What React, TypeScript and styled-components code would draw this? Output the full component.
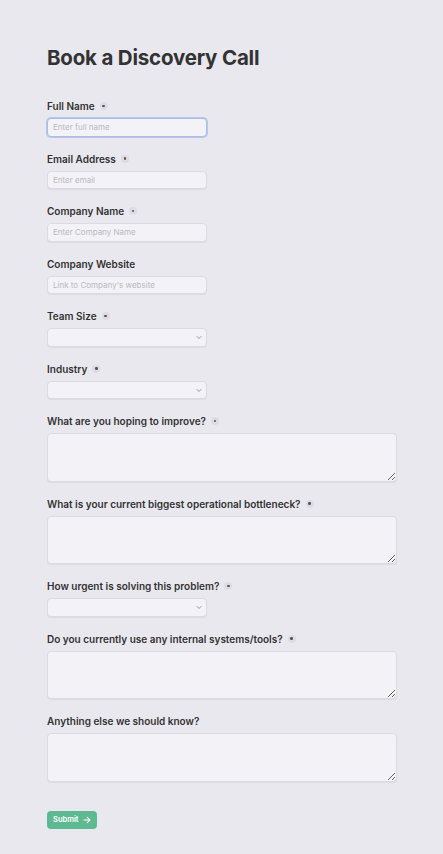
import React from "react";
import styled, { createGlobalStyle } from "styled-components";

const GlobalStyle = createGlobalStyle`
    html, body {
        margin: 0;
        padding: 0;
        background: #e9e8ef;
    }
    body {
        font-family: Inter, "Noto Sans", sans-serif;
        color: #333333;
    }
`;

const Page = styled.div`
    min-height: 854px;
    box-sizing: border-box;
    padding: 44px 46px 40px 47px;
    background: #e9e8ef;
`;

const Heading = styled.h1`
    margin: 0 0 26px;
    font-size: 20.5px;
    line-height: 28px;
    font-weight: 700;
    letter-spacing: -0.2px;
    color: #333333;
`;

const Form = styled.form`
    display: flex;
    flex-direction: column;
`;

const Field = styled.div`
    display: flex;
    flex-direction: column;
    gap: 4px;
    margin-bottom: 14px;
`;

const Label = styled.label`
    display: flex;
    align-items: center;
    gap: 5px;
    height: 16px;
    font-size: 10px;
    font-weight: 600;
    color: #333333;
`;

const Required = styled.span`
    display: inline-flex;
    align-items: center;
    justify-content: center;
    width: 8px;
    height: 8px;
    border-radius: 50%;
    background: #dddce3;

    &::after {
        content: "";
        width: 2.5px;
        height: 2.5px;
        border-radius: 50%;
        background: #555555;
    }
`;

const Input = styled.input<{ $focused?: boolean }>`
    display: block;
    box-sizing: border-box;
    width: 160px;
    height: 18.5px;
    padding: 0 5px;
    font-family: Inter, "Noto Sans", sans-serif;
    font-size: 8px;
    color: #333333;
    background: #f3f2f6;
    border: 1px solid ${(p) => (p.$focused ? "#a9bde6" : "#dcdbe3")};
    border-radius: 4px;
    box-shadow: ${(p) =>
        p.$focused
            ? "0 0 0 1px #b7c8ec"
            : "0 1px 1px rgba(0, 0, 0, 0.06)"};
    outline: none;

    &::placeholder {
        color: #bab9bf;
    }
`;

const SelectWrap = styled.div`
    position: relative;
    width: 160px;
    height: 18.5px;
`;

const Select = styled.select`
    display: block;
    box-sizing: border-box;
    width: 160px;
    height: 18.5px;
    margin: 0;
    appearance: none;
    background: #f3f2f6;
    border: 1px solid #dcdbe3;
    border-radius: 4px;
    box-shadow: 0 1px 1px rgba(0, 0, 0, 0.06);
    outline: none;
`;

const Chevron = styled.svg`
    position: absolute;
    right: 5px;
    top: 7px;
    width: 6px;
    height: 5px;
    pointer-events: none;
`;

const TextArea = styled.textarea`
    display: block;
    box-sizing: border-box;
    width: 350px;
    height: 48.6px;
    margin: 0;
    background: #f3f2f6;
    border: 1px solid #dcdbe3;
    border-radius: 4px;
    box-shadow: 0 1px 1px rgba(0, 0, 0, 0.06);
    outline: none;
    resize: vertical;
`;

const Submit = styled.button`
    display: inline-flex;
    align-items: center;
    gap: 4px;
    align-self: flex-start;
    margin-top: 15px;
    height: 18px;
    padding: 0 6px;
    font-family: Inter, "Noto Sans", sans-serif;
    font-size: 7.5px;
    font-weight: 600;
    color: #ffffff;
    background: #5dba90;
    border: none;
    border-radius: 4px;
    cursor: pointer;
`;

type Kind = "input" | "select" | "textarea";

interface FieldDef {
    label: string;
    kind: Kind;
    required?: boolean;
    placeholder?: string;
}

const fields: FieldDef[] = [
    { label: "Full Name", kind: "input", required: true, placeholder: "Enter full name" },
    { label: "Email Address", kind: "input", required: true, placeholder: "Enter email" },
    { label: "Company Name", kind: "input", required: true, placeholder: "Enter Company Name" },
    { label: "Company Website", kind: "input", placeholder: "Link to Company's website" },
    { label: "Team Size", kind: "select", required: true },
    { label: "Industry", kind: "select", required: true },
    { label: "What are you hoping to improve?", kind: "textarea", required: true },
    { label: "What is your current biggest operational bottleneck?", kind: "textarea", required: true },
    { label: "How urgent is solving this problem?", kind: "select", required: true },
    { label: "Do you currently use any internal systems/tools?", kind: "textarea", required: true },
    { label: "Anything else we should know?", kind: "textarea" },
];

function Control({ def, index }: { def: FieldDef; index: number }) {
    if (def.kind === "select") {
        return (
            <SelectWrap>
                <Select defaultValue="">
                    <option value="" />
                </Select>
                <Chevron viewBox="0 0 6 5" fill="none">
                    <path d="M1 1.5 L3 3.5 L5 1.5" stroke="#8c8b92" strokeWidth="0.9" strokeLinecap="round" strokeLinejoin="round" />
                </Chevron>
            </SelectWrap>
        );
    }
    if (def.kind === "textarea") {
        return <TextArea />;
    }
    return <Input placeholder={def.placeholder} $focused={index === 0} autoFocus={index === 0} />;
}

export default function App() {
    return (
        <>
            <GlobalStyle />
            <Page>
                <Heading>Book a Discovery Call</Heading>
                <Form onSubmit={(e) => e.preventDefault()}>
                    {fields.map((def, i) => (
                        <Field key={def.label}>
                            <Label>
                                {def.label}
                                {def.required && <Required />}
                            </Label>
                            <Control def={def} index={i} />
                        </Field>
                    ))}
                    <Submit type="submit">
                        Submit
                        <svg width="8" height="8" viewBox="0 0 8 8" fill="none">
                            <path d="M1 4 H7 M4.3 1.3 L7 4 L4.3 6.7" stroke="#ffffff" strokeWidth="1.1" strokeLinecap="round" strokeLinejoin="round" />
                        </svg>
                    </Submit>
                </Form>
            </Page>
        </>
    );
}
